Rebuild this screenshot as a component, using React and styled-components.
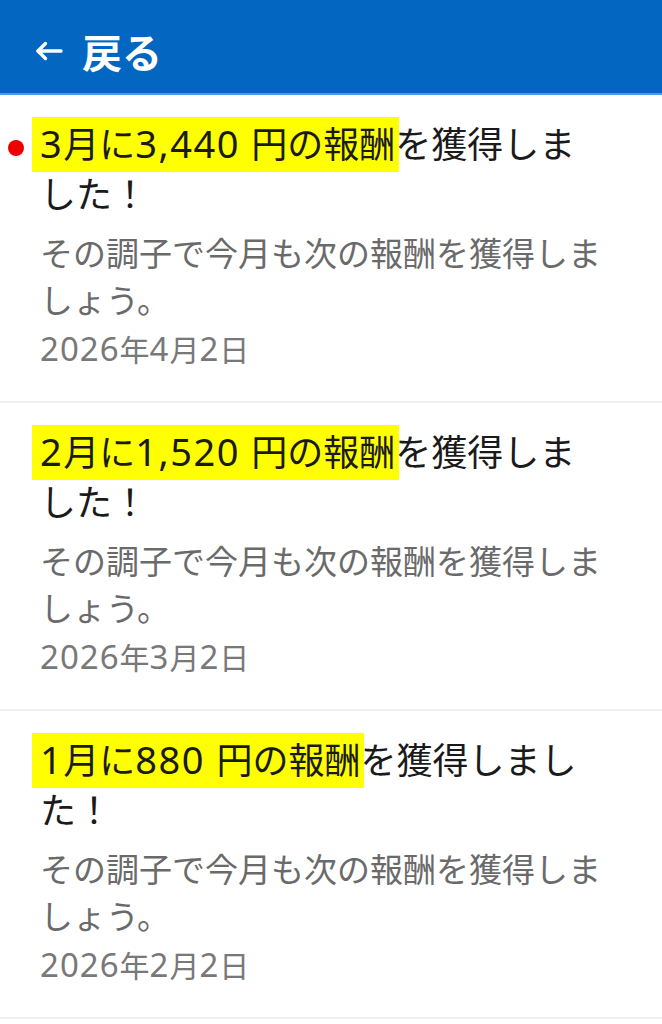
import React from "react";
import styled, { createGlobalStyle } from "styled-components";

const Global = createGlobalStyle`
  html, body { margin: 0; padding: 0; background: #fff; }
  body { font-family: "Noto Sans", "Noto Sans CJK JP", sans-serif; }
`;

const Page = styled.div`
  width: 662px;
  min-height: 1024px;
  background: #fff;
`;

const Header = styled.header`
  height: 95px;
  box-sizing: border-box;
  background: #0367c1;
  border-bottom: 2px solid #4e9be0;
  display: flex;
  align-items: center;
  padding: 9px 0 0 35px;
  gap: 19px;
  color: #fff;
`;

const BackArrow = styled.svg`
  width: 28px;
  height: 20px;
  flex: none;
`;

const HeaderTitle = styled.span`
  font-family: "Noto Sans CJK JP", sans-serif;
  font-size: 40px;
  font-weight: 700;
  line-height: 1;
  letter-spacing: 0px;
`;

const List = styled.div`
  display: flex;
  flex-direction: column;
`;

const Item = styled.div`
  position: relative;
  padding: 25px 60px 33px 40px;
  border-bottom: 2px solid #efefef;
`;

const Dot = styled.span`
  position: absolute;
  left: 8px;
  top: 45px;
  width: 16px;
  height: 16px;
  border-radius: 50%;
  background: #ee0000;
`;

const Title = styled.div`
  font-size: 36px;
  line-height: 50px;
  color: #1a1a1a;
`;

const Mark = styled.span`
  background: #ffff00;
  margin-left: -8px;
  padding: 3px 4px 3px 8px;
  margin-right: -4px;
`;

const Num = styled.span`
  font-size: ${(p) => p.$size}px;
  letter-spacing: ${(p) => p.$track}px;
  line-height: 1;
`;

const Body = styled.div`
  margin-top: 10px;
  font-size: 33px;
  line-height: 47px;
  color: #6a6a6a;
`;

const DateText = styled.div`
  margin-top: 8px;
  font-size: 30px;
  line-height: 36px;
  color: #787878;
`;

const items = [
  { month: "3", amount: "3,440", unread: true, date: ["2026", "4", "2"] },
  { month: "2", amount: "1,520", unread: false, date: ["2026", "3", "2"] },
  { month: "1", amount: "880", unread: false, date: ["2026", "2", "2"] },
];

const T = ({ children }) => (
  <Num $size={38} $track={1.5}>
    {children}
  </Num>
);
const D = ({ children }) => (
  <Num $size={33} $track={1}>
    {children}
  </Num>
);

export default function App() {
  return (
    <Page>
      <Global />
      <Header>
        <BackArrow viewBox="0 0 28 20" fill="none" stroke="#fff" strokeWidth="3.4" strokeLinecap="round" strokeLinejoin="round">
          <path d="M26 10H3" />
          <path d="M10.5 2.5L3 10l7.5 7.5" />
        </BackArrow>
        <HeaderTitle>戻る</HeaderTitle>
      </Header>
      <List>
        {items.map((it, i) => (
          <Item key={i}>
            {it.unread && <Dot />}
            <Title>
              <Mark>
                <T>{it.month}</T>月に<T>{it.amount} </T>円の報酬
              </Mark>
              を獲得しました！
            </Title>
            <Body>その調子で今月も次の報酬を獲得しましょう。</Body>
            <DateText>
              <D>{it.date[0]}</D>年<D>{it.date[1]}</D>月<D>{it.date[2]}</D>日
            </DateText>
          </Item>
        ))}
      </List>
    </Page>
  );
}
